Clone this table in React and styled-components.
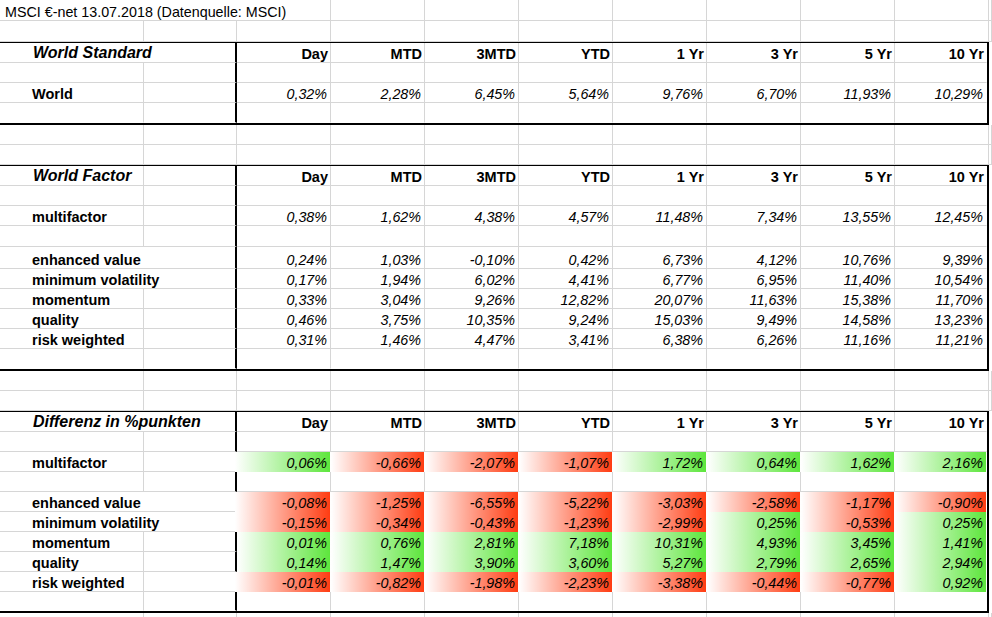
import React from "react";
import styled, { createGlobalStyle, css } from "styled-components";

// SHEET COLOURS
const GRID = "#d6d6d6";
const GREEN = "#5de63c";
const RED = "#ff3c12";

// COLUMN LAYOUT (A, B, Day..10 Yr, rest of window)
const SHEET_COLS = "144px 93px repeat(8, 94px) 1fr";
const BLOCK_COLS = "144px 93px repeat(7, 94px) 92px";

const PERIODS = ["Day", "MTD", "3MTD", "YTD", "1 Yr", "3 Yr", "5 Yr", "10 Yr"];

const sections = [
  {
    heading: "World Standard",
    wide: true,
    rows: [
      { h: 20 },
      { label: "World", values: ["0,32%", "2,28%", "6,45%", "5,64%", "9,76%", "6,70%", "11,93%", "10,29%"] },
      { h: 20 },
    ],
  },
  {
    heading: "World Factor",
    rows: [
      { h: 20 },
      { label: "multifactor", values: ["0,38%", "1,62%", "4,38%", "4,57%", "11,48%", "7,34%", "13,55%", "12,45%"] },
      { h: 21 },
      { h: 22, label: "enhanced value", wide: true, values: ["0,24%", "1,03%", "-0,10%", "0,42%", "6,73%", "4,12%", "10,76%", "9,39%"] },
      { label: "minimum volatility", wide: true, values: ["0,17%", "1,94%", "6,02%", "4,41%", "6,77%", "6,95%", "11,40%", "10,54%"] },
      { label: "momentum", values: ["0,33%", "3,04%", "9,26%", "12,82%", "20,07%", "11,63%", "15,38%", "11,70%"] },
      { label: "quality", values: ["0,46%", "3,75%", "10,35%", "9,24%", "15,03%", "9,49%", "14,58%", "13,23%"] },
      { label: "risk weighted", values: ["0,31%", "1,46%", "4,47%", "3,41%", "6,38%", "6,26%", "11,16%", "11,21%"] },
      { h: 20 },
    ],
  },
  {
    heading: "Differenz in %punkten",
    wide: true,
    diff: true,
    rows: [
      { h: 20 },
      { label: "multifactor", bleed: true, values: ["0,06%", "-0,66%", "-2,07%", "-1,07%", "1,72%", "0,64%", "1,62%", "2,16%"] },
      { h: 20 },
      { label: "enhanced value", wide: true, bleed: true, values: ["-0,08%", "-1,25%", "-6,55%", "-5,22%", "-3,03%", "-2,58%", "-1,17%", "-0,90%"] },
      { label: "minimum volatility", wide: true, bleed: true, values: ["-0,15%", "-0,34%", "-0,43%", "-1,23%", "-2,99%", "0,25%", "-0,53%", "0,25%"] },
      { label: "momentum", values: ["0,01%", "0,76%", "2,81%", "7,18%", "10,31%", "4,93%", "3,45%", "1,41%"] },
      { label: "quality", values: ["0,14%", "1,47%", "3,90%", "3,60%", "5,27%", "2,79%", "2,65%", "2,94%"] },
      { label: "risk weighted", bleed: true, values: ["-0,01%", "-0,82%", "-1,98%", "-2,23%", "-3,38%", "-0,44%", "-0,77%", "0,92%"] },
      { h: 19 },
    ],
  },
];

const GlobalStyle = createGlobalStyle`
  html, body {
    margin: 0;
    padding: 0;
    background: #fff;
  }
  body {
    font-family: "Liberation Sans", Arial, sans-serif;
    color: #000;
  }
`;

const Sheet = styled.div`
  width: 992px;
  height: 617px;
  overflow: hidden;
  background: #fff;
`;

const Row = styled.div`
  display: grid;
  grid-template-columns: ${SHEET_COLS};
  height: ${(p) => p.$h || 20}px;
`;

const Cell = styled.div`
  box-sizing: border-box;
  min-width: 0;
  display: flex;
  align-items: flex-end;
  grid-column: span ${(p) => p.$span || 1};
  border-right: 1px solid ${GRID};
  border-bottom: 1px solid ${GRID};
  white-space: nowrap;
  font-size: 14.3px;
  line-height: normal;
  ${(p) =>
    p.$divider &&
    css`
      border-right: 2px solid #000;
    `}
`;

const Blank = styled(Cell)``;

const Title = styled(Cell)`
  padding-left: 5px;
`;

const Heading = styled(Cell)`
  padding-left: 33px;
  font-size: 16px;
  font-weight: bold;
  font-style: italic;
`;

const Label = styled(Cell)`
  padding-left: 32px;
  font-size: 14.5px;
  font-weight: bold;
`;

const ColHead = styled(Cell)`
  justify-content: flex-end;
  padding-right: 2px;
  font-size: 14.5px;
  font-weight: bold;
`;

const Value = styled(Cell)`
  justify-content: flex-end;
  padding-right: 3px;
  font-style: italic;
  ${(p) =>
    p.$fill &&
    css`
      background: linear-gradient(90deg, #fff 0%, ${p.$fill === "red" ? RED : GREEN} 100%);
      border-color: transparent;
    `}
  ${(p) =>
    p.$bleed &&
    css`
      margin-left: -2px;
    `}
`;

const Block = styled.div`
  width: 987px;
  margin-top: -1px;
  border-top: 2px solid #000;
  border-bottom: 2px solid #000;
  border-right: 2px solid #000;

  ${Row} {
    grid-template-columns: ${BLOCK_COLS};
  }
  ${Row} > *:last-child {
    border-right-color: transparent;
  }
  ${Row}:last-child > * {
    border-bottom-color: transparent;
  }
`;

// PLAIN SHEET ROW OUTSIDE THE BOXES
const SheetRow = ({ h }) => (
  <Row $h={h}>
    {Array.from({ length: 11 }, (_, i) => (
      <Blank key={i} />
    ))}
  </Row>
);

// FIRST TWO COLUMNS OF A BOXED ROW (label may spill into column B)
const Lead = ({ as: Comp, text, wide }) =>
  wide ? (
    <Comp $span={2} $divider>
      {text}
    </Comp>
  ) : (
    <>
      {text ? <Comp>{text}</Comp> : <Blank />}
      <Blank $divider />
    </>
  );

const Section = ({ section }) => (
  <Block>
    <Row>
      <Lead as={Heading} text={section.heading} wide={section.wide} />
      {PERIODS.map((p) => (
        <ColHead key={p}>{p}</ColHead>
      ))}
    </Row>
    {section.rows.map((row, i) => (
      <Row key={i} $h={row.h}>
        <Lead as={Label} text={row.label} wide={row.wide} />
        {row.values
          ? row.values.map((v, j) => (
              <Value
                key={j}
                $fill={section.diff ? (v.startsWith("-") ? "red" : "green") : null}
                $bleed={section.diff && row.bleed && j === 0}
              >
                {v}
              </Value>
            ))
          : PERIODS.map((p) => <Blank key={p} />)}
      </Row>
    ))}
  </Block>
);

export default function App() {
  return (
    <>
      <GlobalStyle />
      <Sheet>
        <Row $h={21}>
          <Title $span={3}>MSCI €-net 13.07.2018 (Datenquelle: MSCI)</Title>
          {Array.from({ length: 8 }, (_, i) => (
            <Blank key={i} />
          ))}
        </Row>
        <SheetRow h={21} />
        {sections.map((s, i) => (
          <React.Fragment key={s.heading}>
            {i > 0 && (
              <>
                <SheetRow h={20} />
                <SheetRow h={20} />
              </>
            )}
            <Section section={s} />
          </React.Fragment>
        ))}
        <SheetRow h={20} />
      </Sheet>
    </>
  );
}
